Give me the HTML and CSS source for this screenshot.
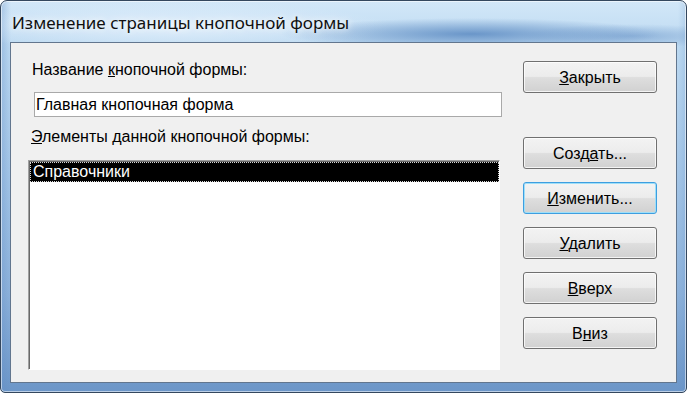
FILE: index.html
```html
<!DOCTYPE html>
<html lang="ru">
<head>
<meta charset="utf-8">
<title>Изменение страницы кнопочной формы</title>
<link rel="stylesheet" href="styles.css">
</head>
<body>
<div class="window">
  <div class="titlebar"><span class="title">Изменение страницы кнопочной формы</span></div>
  <div class="client">
    <div class="left">
      <div class="label l1">Название <u>к</u>нопочной формы:</div>
      <div class="textbox">Главная кнопочная форма</div>
      <div class="label l2"><u>Э</u>лементы данной кнопочной формы:</div>
      <div class="listbox">
        <div class="item selected">Справочники</div>
      </div>
    </div>
    <div class="right">
      <button class="btn close"><u>З</u>акрыть</button>
      <button class="btn">Созд<u>а</u>ть...</button>
      <button class="btn focused"><u>И</u>зменить...</button>
      <button class="btn"><u>У</u>далить</button>
      <button class="btn"><u>В</u>верх</button>
      <button class="btn">В<u>н</u>из</button>
    </div>
  </div>
</div>
</body>
</html>
```

FILE: styles.css
```css
html, body {
  margin: 0;
  padding: 0;
  background: #ffffff;
}

.window {
  box-sizing: border-box;
  width: 687px;
  height: 393px;
  display: flex;
  flex-direction: column;
  padding: 0 9px 9px 9px;
  border: 1px solid #34475e;
  border-radius: 7px 7px 5px 5px;
  box-shadow: inset 0 0 0 1px rgba(255, 255, 255, 0.55);
  background:
    radial-gradient(ellipse 190px 16px at 470px 33px, rgba(84, 132, 190, 0.8), rgba(84, 132, 190, 0)),
    radial-gradient(ellipse 110px 12px at 630px 35px, rgba(110, 152, 202, 0.6), rgba(110, 152, 202, 0)),
    radial-gradient(ellipse 220px 26px at 170px 26px, rgba(228, 241, 252, 0.8), rgba(228, 241, 252, 0)),
    linear-gradient(90deg, rgba(96, 140, 196, 0.35) 0px, rgba(96, 140, 196, 0) 10px, rgba(96, 140, 196, 0) 677px, rgba(96, 140, 196, 0.25) 687px),
    linear-gradient(180deg, #d2e7f8 0%, #bcd9f1 12%, #a8c9e9 40%, #8db2db 75%, #6c96c8 100%);
  font-family: "Liberation Sans", Arial, sans-serif;
}

.titlebar {
  height: 41px;
  flex: none;
  padding-left: 2px;
  display: flex;
  align-items: flex-start;
}

.title {
  margin-top: 10px;
  font-family: "Noto Sans", "Open Sans", sans-serif;
  font-size: 17px;
  line-height: 23px;
  color: #101010;
  text-shadow: 0 0 6px rgba(255, 255, 255, 0.9), 0 0 12px rgba(255, 255, 255, 0.7);
}

.client {
  flex: 1;
  display: flex;
  background: #f0f0f0;
  border: 1px solid #62768e;
}

.left {
  display: flex;
  flex-direction: column;
  margin-left: 17px;
  width: 472px;
}

.label {
  font-size: 16px;
  line-height: 19px;
  height: 19px;
  color: #000;
  white-space: nowrap;
}

.l1 {
  margin-top: 17px;
  margin-left: 4px;
}

.l2 {
  margin-top: 10px;
  margin-left: 3px;
}

.textbox {
  box-sizing: border-box;
  margin-top: 13px;
  margin-left: 6px;
  width: 468px;
  height: 25px;
  border: 1px solid #a9a9a9;
  background: #fff;
  padding-left: 1px;
  font-size: 16px;
  line-height: 23px;
  color: #000;
}

.listbox {
  box-sizing: border-box;
  margin-top: 14px;
  width: 472px;
  height: 210px;
  background: #fff;
  border-style: solid;
  border-width: 1px;
  border-color: #a0a0a0 #ffffff #ffffff #a0a0a0;
  box-shadow: inset 1px 1px 0 #696969;
  padding: 1px 0 0 1px;
}

.item {
  box-sizing: border-box;
  height: 20px;
  font-size: 16px;
  line-height: 18px;
  padding-left: 2px;
  color: #000;
}

.item.selected {
  background: #000;
  color: #fff;
  border: 1px dotted #d8d8d8;
}

.right {
  display: flex;
  flex-direction: column;
  gap: 13px;
  margin-left: 23px;
  padding-top: 18px;
}

.btn {
  box-sizing: border-box;
  width: 134px;
  height: 32px;
  padding: 2px 0 0 0;
  border: 1px solid #707070;
  border-radius: 3px;
  background: linear-gradient(180deg, #f3f3f3 0%, #ececec 48%, #dedede 52%, #d1d1d1 100%);
  box-shadow: inset 0 0 0 1px rgba(255, 255, 255, 0.75);
  font-family: "Liberation Sans", Arial, sans-serif;
  font-size: 16px;
  color: #000;
}

.btn.close {
  margin-bottom: 31px;
}

.btn.focused {
  border-color: #3d9ee0;
  box-shadow: inset 0 0 0 1px #9fdff8;
}
```
